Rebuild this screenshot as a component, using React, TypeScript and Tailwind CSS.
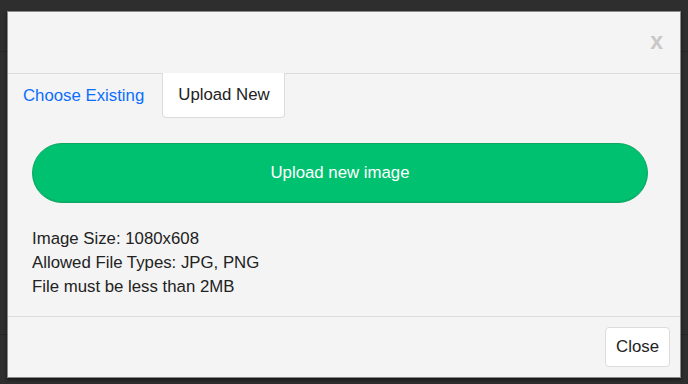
import { useState } from "react";

function PageBehind() {
  return (
    <div className="flex h-full flex-col">
      <div className="h-[52px] shrink-0 border-b border-[#262626]" />
      <div className="h-[283px] shrink-0 border-b border-[#262626]" />
    </div>
  );
}

export default function App() {
  const [tab, setTab] = useState<"existing" | "new">("new");

  return (
    <div className="relative h-[384px] w-[688px] overflow-hidden bg-[#2e2e2e] font-['Liberation_Sans',Arial,sans-serif]">
      <PageBehind />

      <div className="absolute left-[7px] top-[11px] flex h-[367px] w-[674px] flex-col border border-[#8a8a8a] bg-[#f4f4f4] shadow-[0_2px_3px_rgba(0,0,0,0.5)]">
        <div className="flex h-[62px] shrink-0 items-end justify-end border-b border-[#dcdcdc] px-[17px] pb-[20px]">
          <button className="text-[23px] font-bold leading-none text-[#c8c8c8]">x</button>
        </div>

        <div className="flex h-[44px] shrink-0 items-stretch text-[16.8px]">
          <button
            onClick={() => setTab("existing")}
            className="-mt-px px-[15px] text-[#0b6efd]"
          >
            Choose Existing
          </button>
          <button
            onClick={() => setTab("new")}
            className={`-mt-px ml-[3px] rounded-b-[4px] border border-t-0 border-[#dcdcdc] pl-[15px] pr-[14px] text-[#222] ${
              tab === "new" ? "bg-white" : ""
            }`}
          >
            Upload New
          </button>
        </div>

        <div className="flex flex-1 flex-col pl-[24px] pr-[32px] pt-[25px] text-[16.8px]">
          <button className="h-[60px] w-full rounded-full border border-[#0fa863] bg-[#00c170] text-white shadow-[inset_0_-1px_0_rgba(0,0,0,0.08)]">
            Upload new image
          </button>
          <div className="mt-[24px] leading-[24px] text-[#222]">
            <p>Image Size: 1080x608</p>
            <p>Allowed File Types: JPG, PNG</p>
            <p>File must be less than 2MB</p>
          </div>
        </div>

        <div className="flex h-[61px] shrink-0 items-center justify-end border-t border-[#dcdcdc] px-[10px]">
          <button className="h-[40px] rounded-[4px] border border-[#dcdcdc] bg-white px-[10px] text-[16.8px] text-[#222]">
            Close
          </button>
        </div>
      </div>
    </div>
  );
}
